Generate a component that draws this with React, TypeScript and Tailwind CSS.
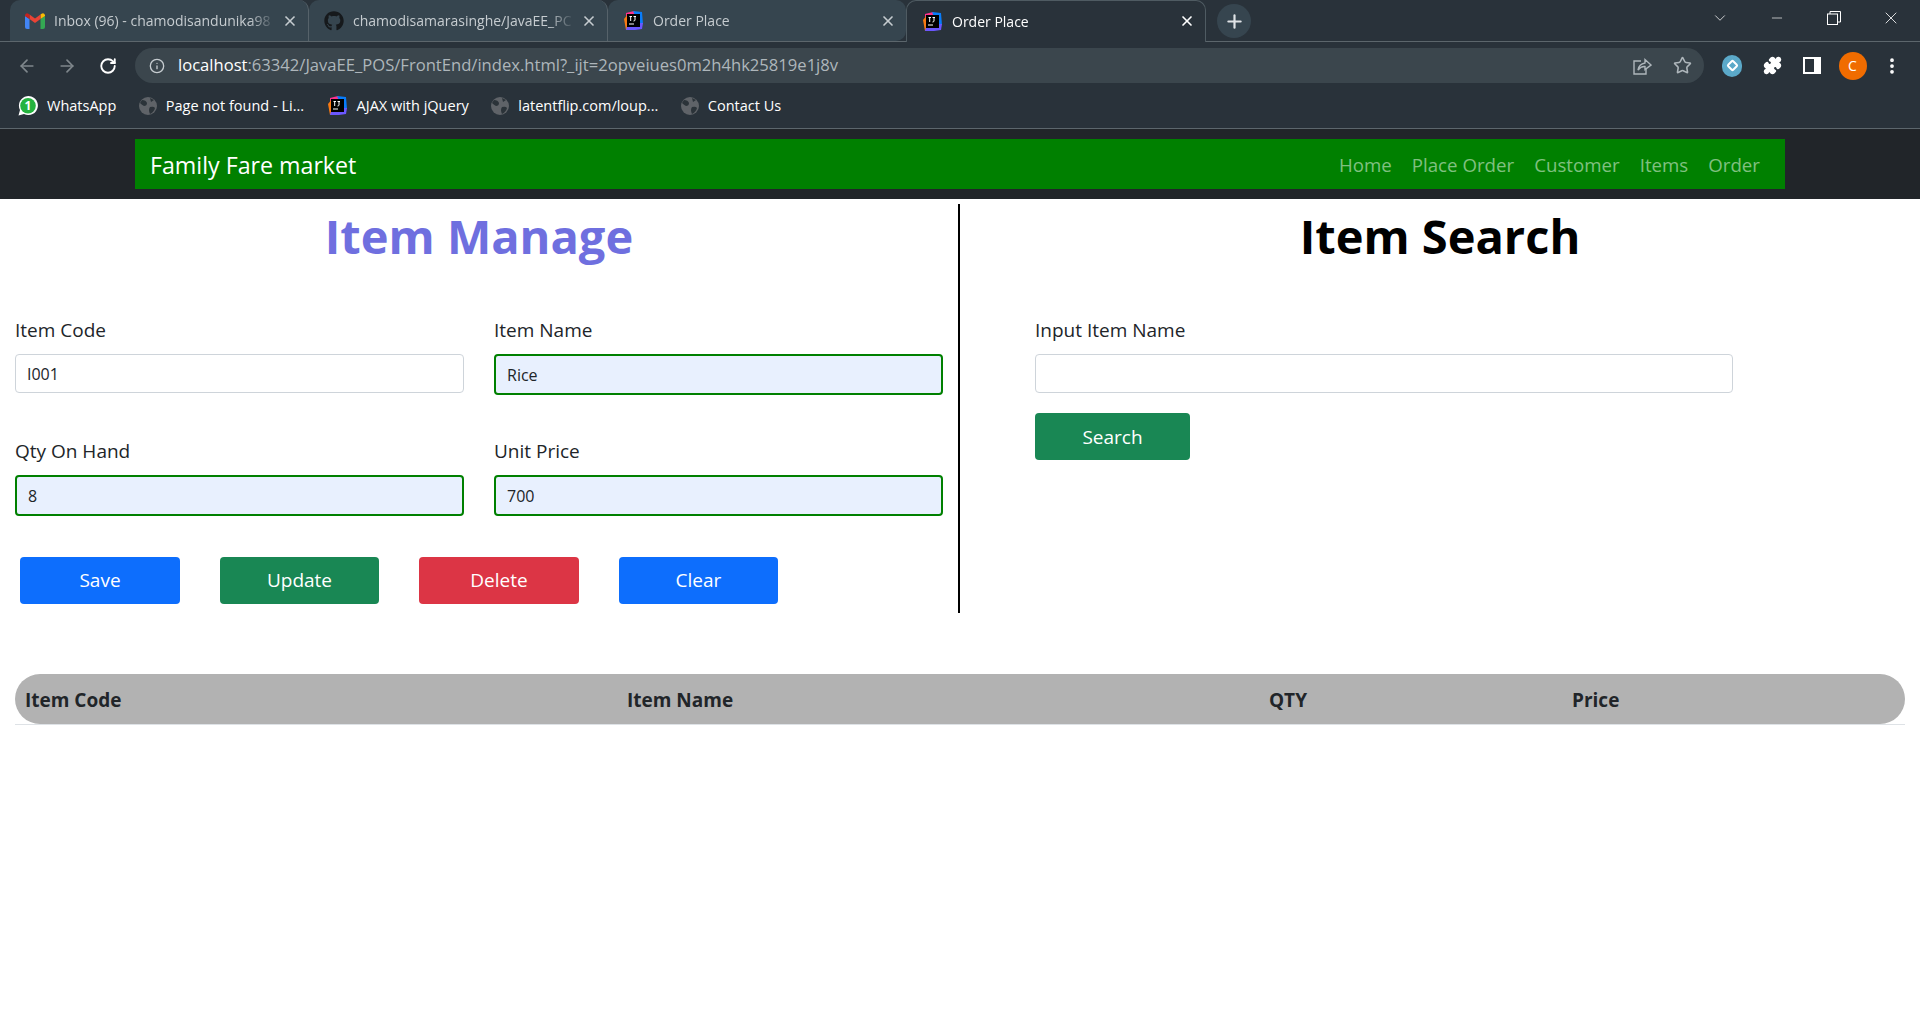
import React from "react";
import { ArrowLeft, ArrowRight, ChevronDown, Info, Minus, MoreVertical, Plus, Puzzle, RotateCw, Star, X } from "lucide-react";
import { FaGithub } from "react-icons/fa";

const sans = "font-['Open_Sans',sans-serif]";

function JetBrainsIcon() {
  return (
    <svg width="21" height="21" viewBox="0 0 21 21" className="shrink-0">
      <path d="M3 3 L11 1 L14 4 L3 9 Z" fill="#ff318c" />
      <path d="M1 9 L5 4 L6 19 L3 20 Z" fill="#f97a12" />
      <path d="M10 1 L19 2 L20 14 L15 13 Z" fill="#087cfa" />
      <path d="M3 20 L5 13 L20 13 L19 19 L12 20 Z" fill="#6b57ff" />
      <rect x="4" y="4" width="13" height="13" fill="#000" />
      <rect x="6" y="13.5" width="5" height="1" fill="#fff" />
      <path d="M6.5 6.5 H9 M7.7 6.5 V11 M10.5 6.5 H13 M12 6.5 V10 Q12 11 10.5 11" stroke="#fff" strokeWidth="1" fill="none" />
    </svg>
  );
}

function GmailIcon() {
  return (
    <svg width="20" height="16" viewBox="0 0 20 16" className="shrink-0">
      <path d="M0 3 L0 14 Q0 16 2 16 L4.5 16 L4.5 6 Z" fill="#4285f4" />
      <path d="M20 3 L20 14 Q20 16 18 16 L15.5 16 L15.5 6 Z" fill="#34a853" />
      <path d="M15.5 6 L15.5 1.5 L17 0.5 Q19 -0.5 20 2 L20 3 Z" fill="#fbbc04" />
      <path d="M4.5 6 L10 10 L15.5 6 L15.5 1.5 L10 5.5 L4.5 1.5 Z" fill="#ea4335" />
      <path d="M0 3 L0 2 Q1 -0.5 3 0.5 L4.5 1.5 L4.5 6 Z" fill="#c5221f" />
    </svg>
  );
}

function GlobeIcon() {
  return (
    <svg width="18" height="18" viewBox="0 0 18 18" className="shrink-0">
      <circle cx="9" cy="9" r="9" fill="#5f6368" />
      <path d="M3 3 Q7 3 8 6 Q8 9 5 9 Q3 8 1 6 Z M11 10 Q15 9 16 11 Q15 15 11 17 Q9 13 11 10 Z M11 1 L15 3 L12 5 Z" fill="#2b3339" />
    </svg>
  );
}

function WhatsAppIcon() {
  return (
    <svg width="20" height="20" viewBox="0 0 20 20" className="shrink-0">
      <path d="M0.5 19.5 L2 14 A9.5 9.5 0 1 1 6 18 Z" fill="#fff" />
      <circle cx="10" cy="9.8" r="7.8" fill="#25b33f" />
      <text x="10" y="14" textAnchor="middle" fontSize="12" fontWeight="700" fill="#fff" fontFamily="Open Sans">1</text>
    </svg>
  );
}

function Tab({ icon, title, active, width }: { icon: React.ReactNode; title: string; active?: boolean; width: string }) {
  return (
    <div
      className={`flex items-center rounded-t-[10px] pl-[15px] pr-[10px] ${width} ${
        active ? "relative h-[42px] border border-b-0 border-[#4f5b62] bg-[#29323a] pb-[1px] text-white" : "h-[41px] border-r border-[#56626a] bg-[#36454f] text-[#c6ccd0]"
      }`}
    >
      {icon}
      <span className="ml-[9px] min-w-0 flex-1 overflow-hidden text-[14px] whitespace-nowrap [mask-image:linear-gradient(to_right,black_88%,transparent)]">{title}</span>
      <X size={16} strokeWidth={2.5} className="ml-[6px] shrink-0" />
    </div>
  );
}

function Bookmark({ icon, label }: { icon: React.ReactNode; label: string }) {
  return (
    <div className="flex items-center gap-[9px]">
      {icon}
      <span className="text-[14.5px] text-white">{label}</span>
    </div>
  );
}

function BrowserChrome() {
  return (
    <div className={`bg-[#29323a] ${sans}`}>
      <div className="flex h-[42px] items-start border-b border-[#5c666c] pl-[10px]">
        <Tab width="w-[299px]" title="Inbox (96) - chamodisandunika98" icon={<GmailIcon />} />
        <Tab width="w-[299px]" title="chamodisamarasinghe/JavaEE_PC" icon={<FaGithub size={20} color="#16191c" className="shrink-0" />} />
        <Tab width="w-[298px] rounded-br-[10px] border-r-0" title="Order Place" icon={<JetBrainsIcon />} />
        <Tab width="w-[300px]" title="Order Place" active icon={<JetBrainsIcon />} />
        <div className="ml-[11px] mt-[4px] flex h-[34px] w-[34px] items-center justify-center rounded-full bg-[#36454f]">
          <Plus size={21} color="#dfe3e6" strokeWidth={2.5} />
        </div>
        <div className="ml-auto flex h-[36px] items-center text-white">
          <ChevronDown size={18} strokeWidth={1} className="mr-[40px]" />
          <Minus size={16} strokeWidth={1} className="mr-[42px]" />
          <svg width="14" height="14" viewBox="0 0 14 14" fill="none" stroke="#fff" className="mr-[40px]">
            <rect x="0.5" y="3" width="10" height="10.5" />
            <path d="M3 3 V0.5 H13.5 V11 H10.5" />
          </svg>
          <X size={20} strokeWidth={1} className="mr-[19px]" />
        </div>
      </div>
      <div className="flex h-[41px] items-center pl-[7px] pt-[6px]">
        <div className="flex w-[40px] justify-center"><ArrowLeft size={20} color="#7f878c" /></div>
        <div className="flex w-[40px] justify-center"><ArrowRight size={20} color="#7f878c" /></div>
        <div className="flex w-[41px] justify-center"><RotateCw size={18} color="#fff" strokeWidth={2.5} /></div>
        <div className="ml-[7px] flex h-[35px] w-[1569px] items-center rounded-full bg-[#3b464d] pl-[14px] pr-[12px]">
          <Info size={16} color="#c6ccd0" />
          <span className="ml-[13px] text-[16.6px] text-[#aeb6bb]"><span className="text-white">localhost</span>:63342/JavaEE_POS/FrontEnd/index.html?_ijt=2opveiues0m2h4hk25819e1j8v</span>
          <svg width="20" height="20" viewBox="0 0 20 20" fill="none" stroke="#aeb6bb" strokeWidth="1.4" className="ml-auto">
            <path d="M9 5 H2 V18 H14 V13" />
            <path d="M6 14 Q7 8 13 7 V3.5 L19 9 L13 13.5 V10.5 Q9 10 6 14 Z" />
          </svg>
          <Star size={19} color="#aeb6bb" strokeWidth={2} className="ml-[21px]" />
        </div>
        <div className="ml-[8px] flex w-[40px] justify-center">
          <div className="flex h-[22px] w-[20px] items-center justify-center rounded-full bg-[#5ba9c9]">
            <div className="h-[9px] w-[9px] rotate-45 rounded-[2px] border-2 border-white" />
          </div>
        </div>
        <div className="flex w-[40px] justify-center"><Puzzle size={19} color="#fff" fill="#fff" /></div>
        <div className="flex w-[40px] justify-center">
          <div className="flex h-[17px] w-[18px] justify-end border-2 border-white">
            <div className="h-full w-[5px] bg-white" />
          </div>
        </div>
        <div className="flex w-[41px] justify-center">
          <div className="flex h-[28px] w-[28px] items-center justify-center rounded-full bg-[#f06c00] text-[14px] text-white">C</div>
        </div>
        <div className="flex w-[38px] justify-center"><MoreVertical size={20} color="#fff" strokeWidth={2.5} /></div>
      </div>
      <div className="flex h-[46px] items-center gap-[22.5px] border-b border-[#5c666c] pl-[18px]">
        <Bookmark label="WhatsApp" icon={<WhatsAppIcon />} />
        <Bookmark label="Page not found - Li..." icon={<GlobeIcon />} />
        <Bookmark label="AJAX with jQuery" icon={<JetBrainsIcon />} />
        <Bookmark label="latentflip.com/loup..." icon={<GlobeIcon />} />
        <Bookmark label="Contact Us" icon={<GlobeIcon />} />
      </div>
    </div>
  );
}

function Field({ label, value, filled, inputWidth }: { label: string; value?: string; filled?: boolean; inputWidth?: string }) {
  return (
    <div className={inputWidth}>
      <label className="mb-[9px] block h-[30px] text-[19px] leading-[30px] text-[#212529]">{label}</label>
      <input
        readOnly
        value={value ?? ""}
        className={`block w-full rounded-[4px] px-[11px] text-[16px] text-[#212529] outline-none ${
          filled ? "h-[41px] border-2 border-[#008000] bg-[#e8f0fe]" : "h-[39px] border border-[#ced4da] bg-white"
        }`}
      />
    </div>
  );
}

function ActionButton({ label, color, width }: { label: string; color: string; width: string }) {
  return (
    <button className={`h-[47px] rounded-[4px] text-[19px] text-white ${color} ${width}`}>{label}</button>
  );
}

export default function App() {
  return (
    <div className={`min-h-[1030px] bg-white ${sans}`}>
      <BrowserChrome />

      <nav className="h-[70px] bg-[#212529] pt-[10px]">
        <div className="mx-auto flex h-[50px] w-[1650px] items-center bg-[#008000] pl-[15px] pr-[25px] pt-[2px]">
          <span className="text-[23.2px] text-white">Family Fare market</span>
          <div className="ml-auto flex gap-[20px] text-[18.7px] text-[#80c080]">
            <a>Home</a>
            <a>Place Order</a>
            <a>Customer</a>
            <a>Items</a>
            <a>Order</a>
          </div>
        </div>
      </nav>

      <main className="pt-[5px]">
        <div className="flex h-[409px]">
          <section className="w-[960px] border-r-2 border-black px-[15px]">
            <h1 className="h-[111px] text-center text-[47px] leading-[64px] font-bold text-[#6f6fdf]">Item Manage</h1>
            <div className="grid w-[928px] grid-cols-2 gap-x-[30px] auto-rows-[121px]">
              <Field label="Item Code" value="I001" />
              <Field label="Item Name" value="Rice" filled />
              <Field label="Qty On Hand" value="8" filled />
              <Field label="Unit Price" value="700" filled />
            </div>
            <div className="ml-[5px] flex gap-[40px]">
              <ActionButton label="Save" color="bg-[#0d6efd]" width="w-[160px]" />
              <ActionButton label="Update" color="bg-[#198754]" width="w-[159px]" />
              <ActionButton label="Delete" color="bg-[#dc3545]" width="w-[160px]" />
              <ActionButton label="Clear" color="bg-[#0d6efd]" width="w-[159px]" />
            </div>
          </section>
          <section className="w-[960px]">
            <h1 className="h-[111px] text-center text-[47px] leading-[64px] font-bold text-black">Item Search</h1>
            <div className="pl-[75px]">
              <Field label="Input Item Name" inputWidth="w-[698px]" />
              <button className="mt-[20px] h-[47px] w-[155px] rounded-[4px] bg-[#198754] pt-[2px] text-[19px] text-white">Search</button>
            </div>
          </section>
        </div>

        <div className="mt-[61px] px-[15px]">
          <table className="w-full table-fixed border-b border-[#dee2e6] text-left text-[19px] text-[#212529]">
            <thead>
              <tr className="h-[50px] bg-[#b2b2b2]">
                <th className="w-[602px] rounded-l-[25px] pl-[10px] pt-[2px] font-bold">Item Code</th>
                <th className="w-[642px] pl-[10px] pt-[2px] font-bold">Item Name</th>
                <th className="w-[303px] pl-[10px] pt-[2px] font-bold">QTY</th>
                <th className="rounded-r-[25px] pl-[10px] pt-[2px] font-bold">Price</th>
              </tr>
            </thead>
          </table>
        </div>
      </main>
    </div>
  );
}
